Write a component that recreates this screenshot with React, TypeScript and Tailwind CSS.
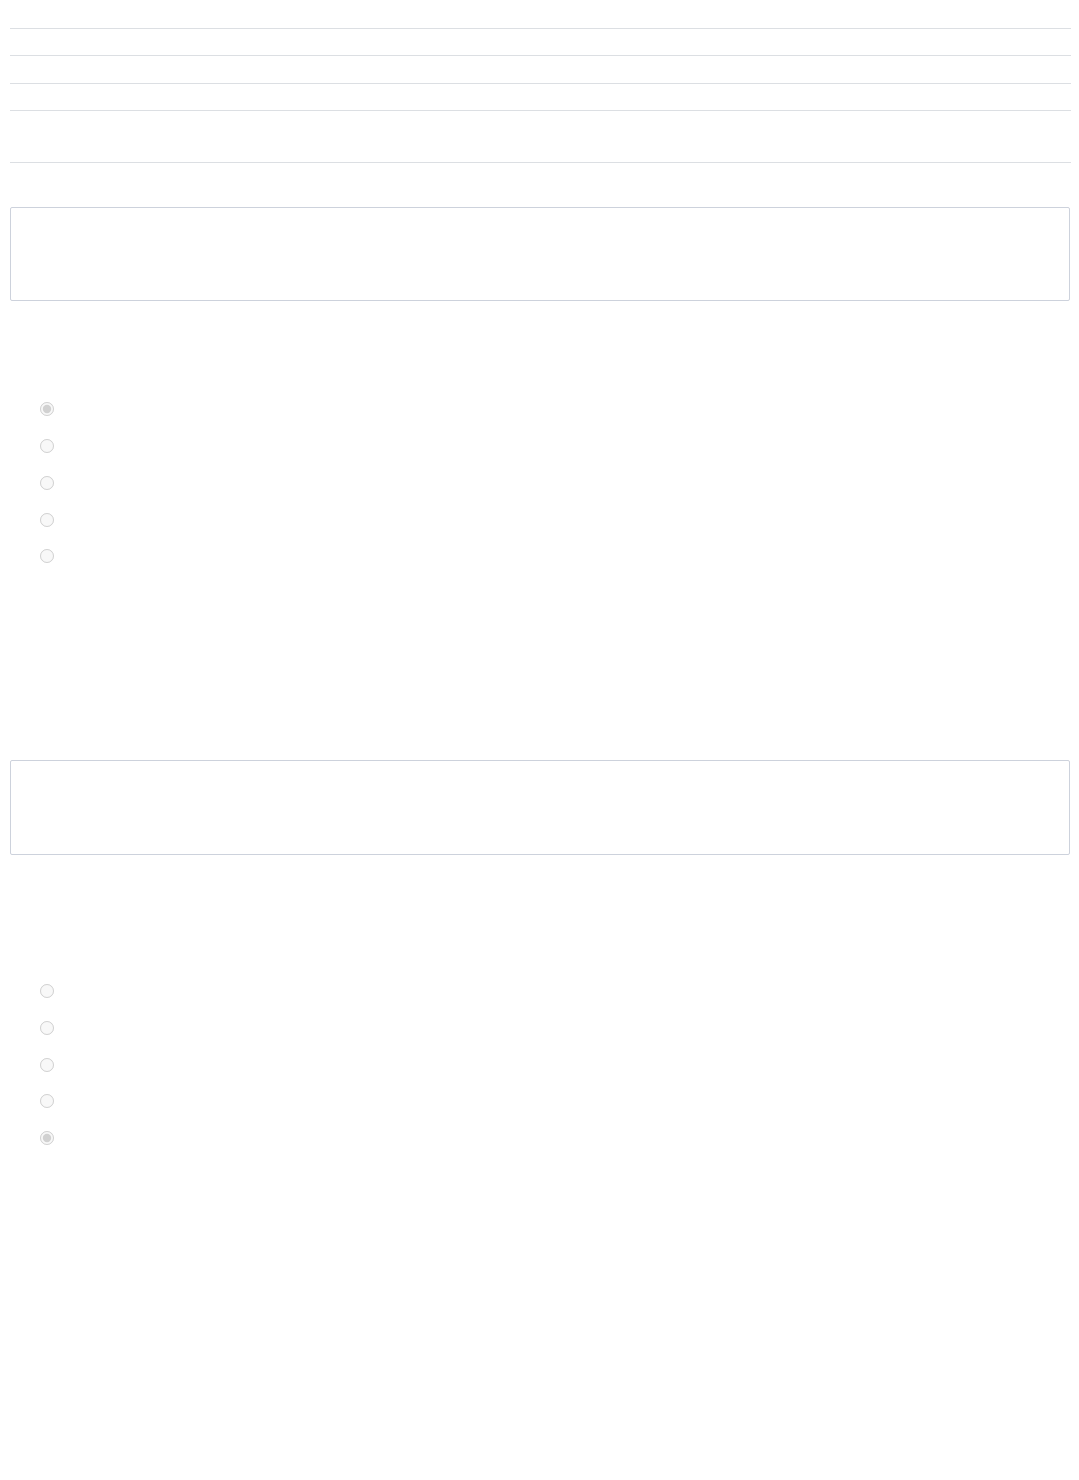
const rows = [29, 27, 28, 27, 52];

function RadioGroup({ name, checked }: { name: string; checked: number }) {
  return (
    <div className="flex flex-col">
      {[0, 1, 2, 3, 4].map((i) => (
        <label key={i} className="flex h-[36.75px] items-center pl-[30px]">
          <input
            type="radio"
            name={name}
            disabled
            defaultChecked={i === checked}
            className="m-0 h-[14px] w-[14px]"
          />
          <span className="ml-2 text-sm text-white"> </span>
        </label>
      ))}
    </div>
  );
}

export default function App() {
  return (
    <div className="min-h-[1480px] bg-white pl-[10px] pr-[8px] font-['Liberation_Sans',Arial,sans-serif] text-sm">
      <div className="flex flex-col">
        {rows.map((h, i) => (
          <div key={i} className="border-b border-[#dcdfe3]" style={{ height: h }} />
        ))}
      </div>

      <div className="mr-[1px] mt-[44px] h-[94px] rounded-[2px] border border-[#cdd2dc]" />

      <div className="mt-[90px]">
        <RadioGroup name="q1" checked={0} />
      </div>

      <div className="mr-[1px] mt-[185px] h-[95px] rounded-[2px] border border-[#cdd2dc]" />

      <div className="mt-[118px]">
        <RadioGroup name="q2" checked={4} />
      </div>
    </div>
  );
}
